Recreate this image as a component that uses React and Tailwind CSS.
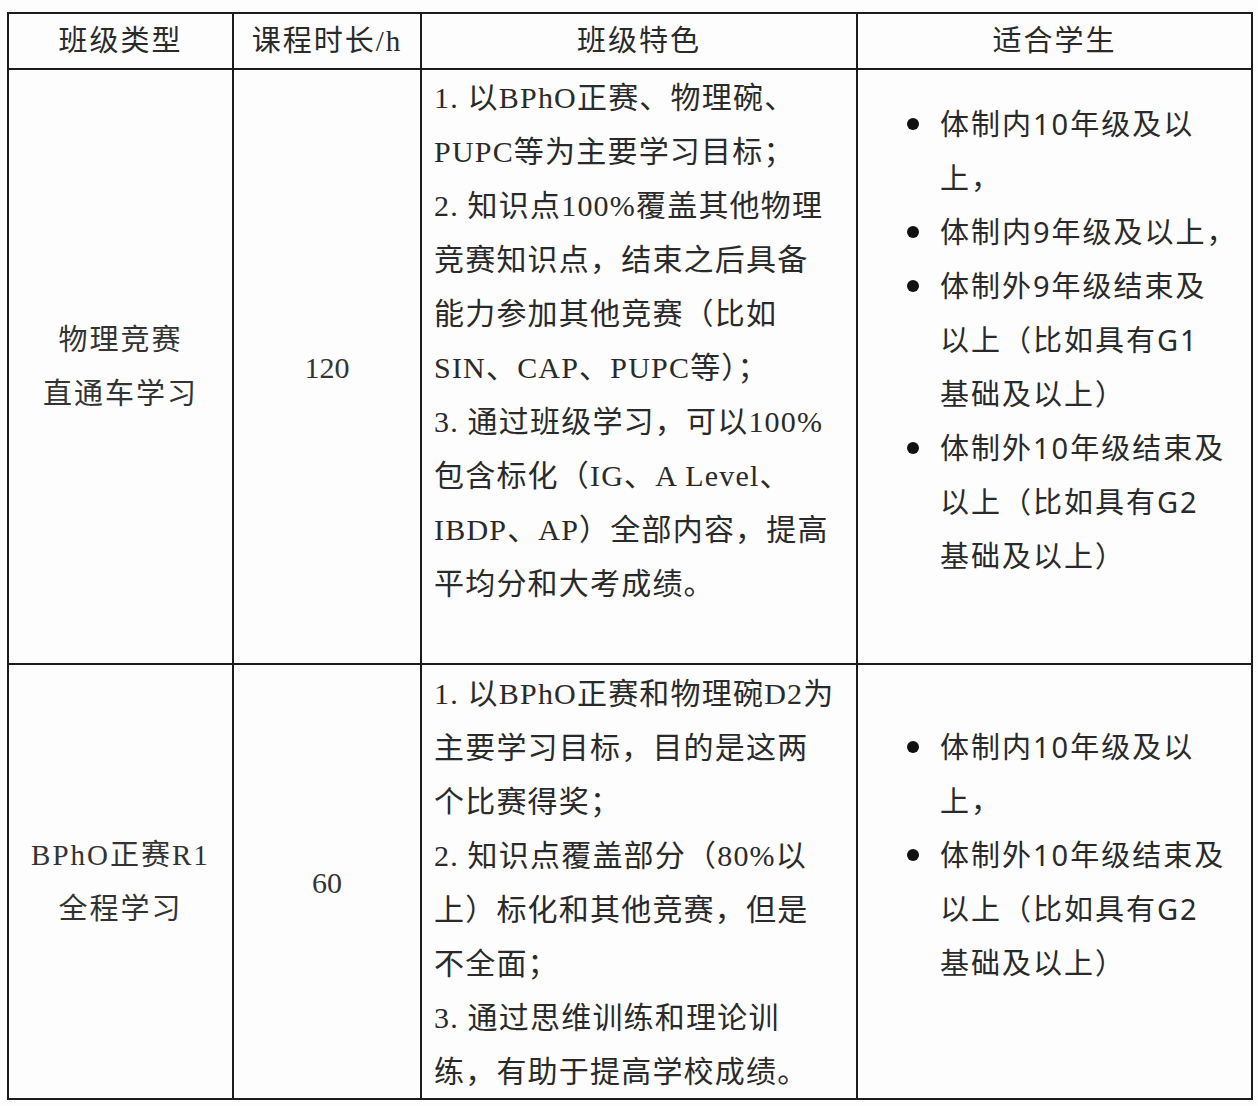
import React from 'react';

const serif = "font-['Liberation_Serif','Noto_Sans_CJK_SC',serif]";
const sans = "font-['Noto_Sans','Noto_Sans_CJK_SC',sans-serif]";

const rows = [
    {
        name: ['物理竞赛', '直通车学习'],
        hours: '120',
        height: 'h-[595px]',
        featurePad: 'pt-[1px]',
        studentPad: 'pt-[27px]',
        features: [
            '1. 以BPhO正赛、物理碗、',
            'PUPC等为主要学习目标；',
            '2. 知识点100%覆盖其他物理',
            '竞赛知识点，结束之后具备',
            '能力参加其他竞赛（比如',
            'SIN、CAP、PUPC等）；',
            '3. 通过班级学习，可以100%',
            '包含标化（IG、A Level、',
            'IBDP、AP）全部内容，提高',
            '平均分和大考成绩。',
        ],
        students: [
            ['体制内10年级及以', '上，'],
            ['体制内9年级及以上，'],
            ['体制外9年级结束及', '以上（比如具有G1', '基础及以上）'],
            ['体制外10年级结束及', '以上（比如具有G2', '基础及以上）'],
        ],
    },
    {
        name: ['BPhO正赛R1', '全程学习'],
        hours: '60',
        height: 'h-[435px]',
        featurePad: 'pt-[2px]',
        studentPad: 'pt-[55px]',
        features: [
            '1. 以BPhO正赛和物理碗D2为',
            '主要学习目标，目的是这两',
            '个比赛得奖；',
            '2. 知识点覆盖部分（80%以',
            '上）标化和其他竞赛，但是',
            '不全面；',
            '3. 通过思维训练和理论训',
            '练，有助于提高学校成绩。',
        ],
        students: [
            ['体制内10年级及以', '上，'],
            ['体制外10年级结束及', '以上（比如具有G2', '基础及以上）'],
        ],
    },
];

const headers = ['班级类型', '课程时长/h', '班级特色', '适合学生'];
const cell = 'border-r-2 border-b-2 border-[#1c1c1c]';

function App() {
    return (
        <div className="w-[1258px] h-[1106px] bg-[#fdfdfd] pt-[12px] pl-[7px]">
            <div className="grid grid-cols-[225px_188px_436px_395px] w-[1246px] border-t-2 border-l-2 border-[#1c1c1c] text-[#2a2a2a]">
                {headers.map((h) => (
                    <div
                        key={h}
                        className={`${cell} ${serif} h-[56px] flex items-center justify-center text-[29px] tracking-[2px] pt-[2px]`}
                    >
                        {h}
                    </div>
                ))}

                {rows.map((row) => (
                    <React.Fragment key={row.hours}>
                        <div
                            className={`${cell} ${serif} ${row.height} flex flex-col items-center justify-center text-[29px] tracking-[2px] leading-[54px] text-[#333]`}
                        >
                            {row.name.map((n) => (
                                <div key={n}>{n}</div>
                            ))}
                        </div>
                        <div
                            className={`${cell} ${serif} ${row.height} flex items-center justify-center text-[30px] text-[#333] pt-[2px]`}
                        >
                            {row.hours}
                        </div>
                        <div
                            className={`${cell} ${serif} ${row.height} ${row.featurePad} pl-[12px] text-[30px] tracking-[1.2px] leading-[54px] whitespace-nowrap`}
                        >
                            {row.features.map((line) => (
                                <div key={line}>{line}</div>
                            ))}
                        </div>
                        <div
                            className={`${cell} ${sans} ${row.height} ${row.studentPad} text-[29px] tracking-[2px] leading-[54px] whitespace-nowrap`}
                        >
                            {row.students.map((item) => (
                                <div key={item[0]} className="flex">
                                    <div className="w-[82px] shrink-0 flex justify-end pr-[21px] pt-[21px]">
                                        <span className="block w-[12px] h-[12px] rounded-full bg-[#111]" />
                                    </div>
                                    <div>
                                        {item.map((line) => (
                                            <div key={line}>{line}</div>
                                        ))}
                                    </div>
                                </div>
                            ))}
                        </div>
                    </React.Fragment>
                ))}
            </div>
        </div>
    );
}

export default App;
